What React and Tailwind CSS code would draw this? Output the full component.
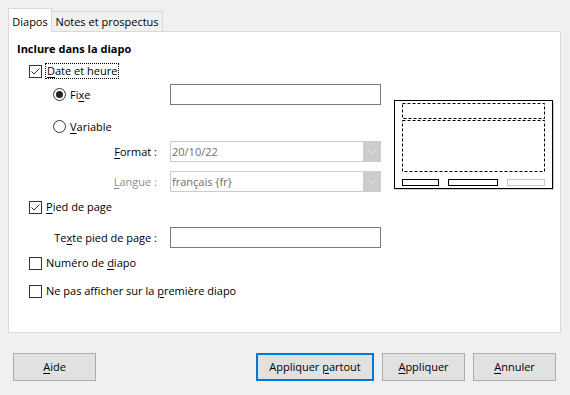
import React from "react";

const U = ({ children }) => <span className="underline underline-offset-2">{children}</span>;

function CheckBox({ checked }) {
  return (
    <svg width="13" height="13" viewBox="0 0 13 13" className="shrink-0">
      <rect x="0.5" y="0.5" width="12" height="12" fill="#fff" stroke="#333" />
      {checked && <path d="M2.5 6.5 L5 9 L10.5 3.5" fill="none" stroke="#333" strokeWidth="1" />}
    </svg>
  );
}

function Radio({ checked }) {
  return (
    <svg width="13" height="13" viewBox="0 0 13 13" className="shrink-0">
      <circle cx="6.5" cy="6.5" r="6" fill="#fff" stroke="#333" />
      {checked && <circle cx="6.5" cy="6.5" r="3.5" fill="#222" />}
    </svg>
  );
}

function Combo({ value }) {
  return (
    <div className="flex h-[21px] w-[211px] border border-[#cccccc] bg-white">
      <div className="flex flex-1 items-center pl-[1px] text-[#6d6d6d]">{value}</div>
      <div className="flex w-[17px] items-center justify-center bg-[#cccccc]">
        <svg width="9" height="5" viewBox="0 0 9 5">
          <path d="M0.5 0.5 L4.5 4.5 L8.5 0.5" fill="none" stroke="#e8e8e8" strokeWidth="1" />
        </svg>
      </div>
    </div>
  );
}

function Btn({ children, w, def }) {
  return (
    <div
      className={
        "flex h-[28px] items-center justify-center bg-[#e1e1e1] text-[#000] " +
        (def ? "border-2 border-[#0078d7]" : "border border-[#adadad]")
      }
      style={{ width: w }}
    >
      <span>{children}</span>
    </div>
  );
}

export default function App() {
  return (
    <div
      className="flex h-[395px] w-[570px] flex-col bg-[#f0f0f0] pl-[8px] pt-[8px] text-[11px] leading-[16px] text-black"
      style={{ fontFamily: '"Open Sans", "Noto Sans", sans-serif' }}
    >
      {/* Tabs */}
      <div className="flex items-end">
        <div className="relative z-10 -mb-[1px] flex h-[24px] w-[44px] items-start justify-center border border-b-0 border-[#d9d9d9] bg-white pt-[5px]">
          Diapos
        </div>
        <div className="flex h-[20px] w-[111px] items-start justify-center border border-b-0 border-l-0 border-[#d9d9d9] bg-[#f0f0f0] pt-[2px]">
          Notes et prospectus
        </div>
      </div>
      {/* Panel */}
      <div className="flex h-[302px] w-[553px] border border-[#d9d9d9] bg-white">
        <div className="flex w-[373px] shrink-0 flex-col pl-[8px]">
          <div className="mt-[9px] flex h-[16px] items-center font-bold">Inclure dans la diapo</div>
          <div className="mt-[6px] flex h-[16px] items-center pl-[12px]">
            <CheckBox checked />
            <span className="ml-[3px] border border-dotted border-[#000] px-[1px] leading-[14px]">
              <U>D</U>ate et heure
            </span>
          </div>
          <div className="mt-[5px] flex h-[21px] items-center">
            <div className="flex w-[153px] shrink-0 items-center pl-[36px]">
              <Radio checked />
              <span className="ml-[4px]">
                Fi<U>x</U>e
              </span>
            </div>
            <div className="h-[21px] w-[211px] shrink-0 border border-[#7a7a7a] bg-white" />
          </div>
          <div className="mt-[11px] flex h-[21px] items-center pl-[36px]">
            <Radio />
            <span className="ml-[4px]">
              <U>V</U>ariable
            </span>
          </div>
          <div className="mt-[4px] flex h-[21px] items-center">
            <div className="w-[140px] shrink-0 text-right">
              <U>F</U>ormat :
            </div>
            <div className="ml-[13px] shrink-0">
              <Combo value="20/10/22" />
            </div>
          </div>
          <div className="mt-[9px] flex h-[21px] items-center">
            <div className="w-[140px] shrink-0 text-right text-[#8d8d8d]">
              <U>L</U>angue :
            </div>
            <div className="ml-[13px] shrink-0">
              <Combo value="français {fr}" />
            </div>
          </div>
          <div className="mt-[7px] flex h-[16px] items-center pl-[12px]">
            <CheckBox checked />
            <span className="ml-[4px]">
              <U>P</U>ied de page
            </span>
          </div>
          <div className="mt-[12px] flex h-[21px] items-center">
            <div className="w-[140px] shrink-0 text-right">
              Te<U>x</U>te pied de page :
            </div>
            <div className="ml-[13px] h-[21px] w-[211px] shrink-0 border border-[#7a7a7a] bg-white" />
          </div>
          <div className="mt-[7px] flex h-[16px] items-center pl-[12px]">
            <CheckBox />
            <span className="ml-[4px]">
              Numéro de <U>d</U>iapo
            </span>
          </div>
          <div className="mt-[12px] flex h-[16px] items-center pl-[12px]">
            <CheckBox />
            <span className="ml-[4px]">
              Ne pas afficher sur la <U>p</U>remière diapo
            </span>
          </div>
        </div>
        <div className="ml-[12px] mt-[68px] shrink-0">
          <svg width="160" height="90" viewBox="0 0 160 90" className="block">
            <rect x="1.5" y="1.5" width="158" height="88" fill="#a0a0a0" />
            <rect x="0.5" y="0.5" width="158" height="88" fill="#fff" stroke="#000" />
            <rect x="8.5" y="3.5" width="142" height="15" fill="none" stroke="#000" strokeDasharray="3 2" />
            <rect x="8.5" y="20.5" width="142" height="51" fill="none" stroke="#000" strokeDasharray="3 2" />
            <rect x="8.5" y="79.5" width="36" height="6" fill="none" stroke="#000" />
            <rect x="54.5" y="79.5" width="49" height="6" fill="none" stroke="#000" />
            <rect x="113.5" y="79.5" width="37" height="6" fill="none" stroke="#c8c8c8" />
          </svg>
        </div>
      </div>
      {/* Buttons */}
      <div className="mt-[20px] flex items-center pl-[5px]">
        <Btn w={83}>
          <U>A</U>ide
        </Btn>
        <div className="ml-[160px]">
          <Btn w={118} def>
            Appliquer <U>p</U>artout
          </Btn>
        </div>
        <div className="ml-[8px]">
          <Btn w={83}>
            <U>A</U>ppliquer
          </Btn>
        </div>
        <div className="ml-[8px]">
          <Btn w={83}>
            <U>A</U>nnuler
          </Btn>
        </div>
      </div>
    </div>
  );
}
